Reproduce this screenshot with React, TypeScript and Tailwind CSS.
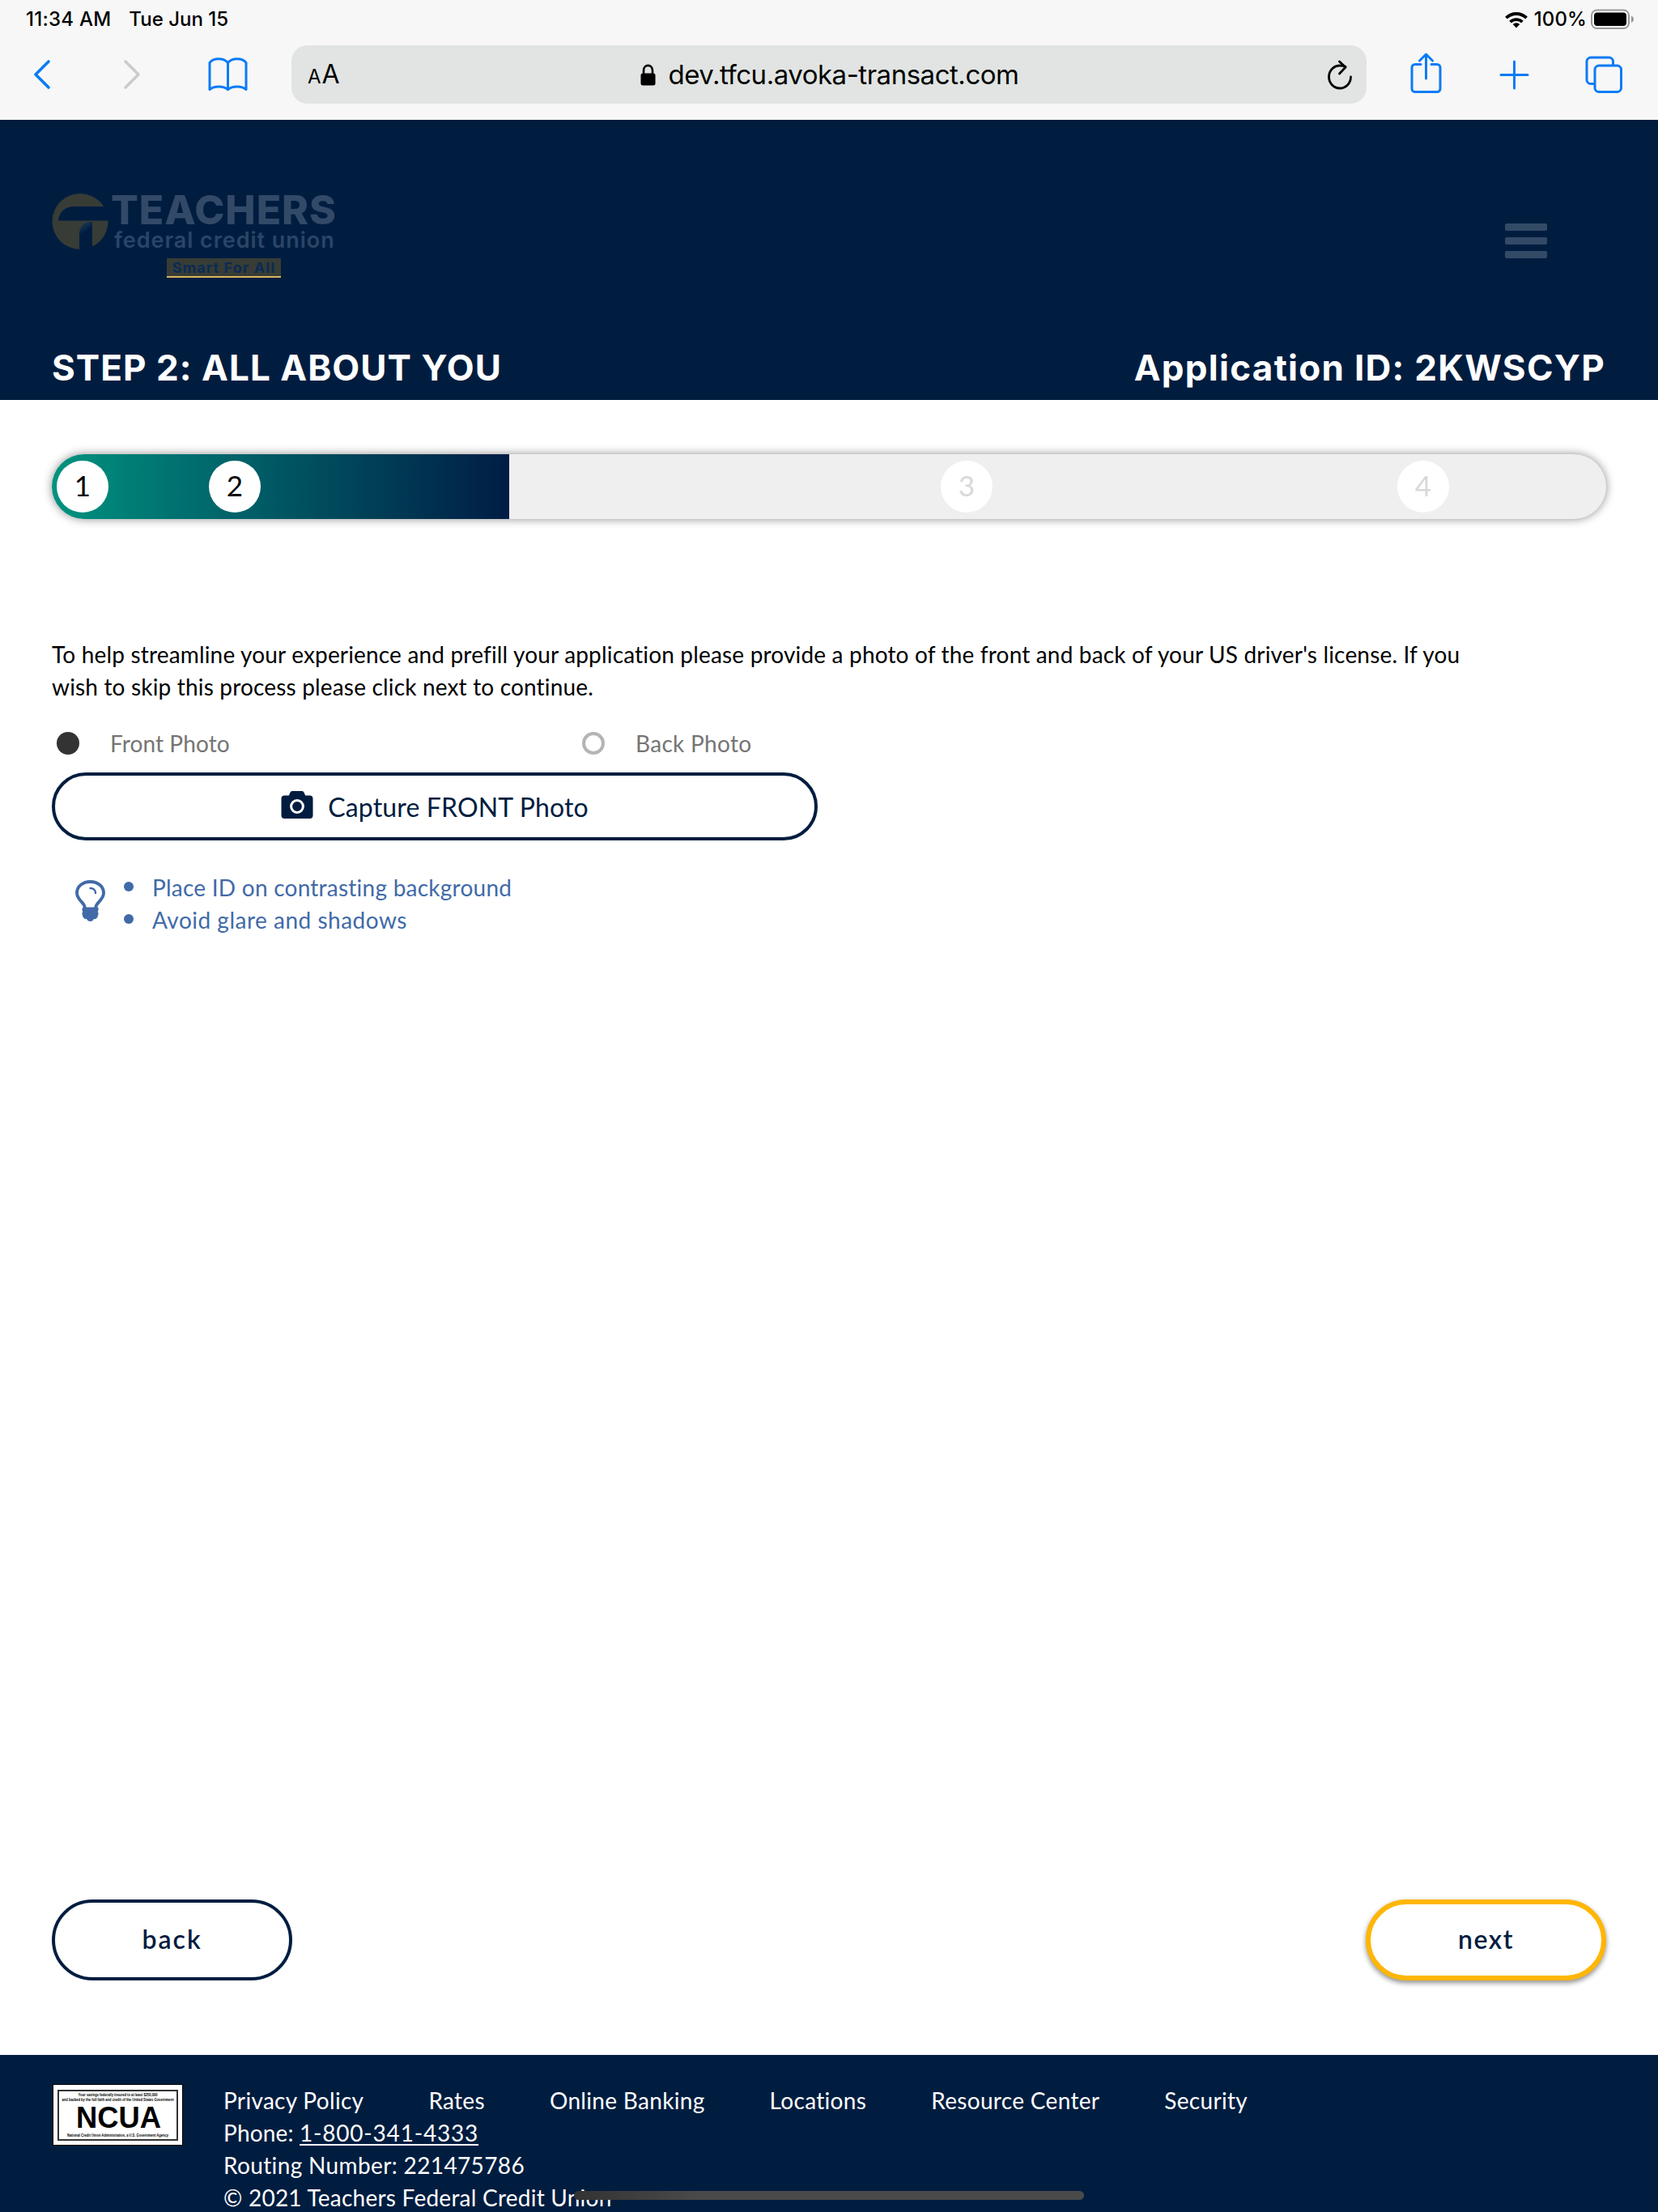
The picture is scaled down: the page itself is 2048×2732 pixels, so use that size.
import type { ReactNode } from "react";

const footerLinks = ["Privacy Policy", "Rates", "Online Banking", "Locations", "Resource Center", "Security"];

function Stroke({ w, h, className, sw = 3, children }: { w: number; h: number; className?: string; sw?: number; children: ReactNode }) {
  return (
    <svg
      width={w}
      height={h}
      viewBox={`0 0 ${w} ${h}`}
      fill="none"
      stroke="currentColor"
      strokeWidth={sw}
      strokeLinecap="round"
      strokeLinejoin="round"
      className={`shrink-0 ${className ?? ""}`}
    >
      {children}
    </svg>
  );
}

function StatusBar() {
  return (
    <div className="flex h-[48px] items-center justify-between pl-[32px] pr-[29px] text-[24px] font-medium text-black">
      <div className="flex gap-[22px] whitespace-nowrap">
        <span className="tracking-[0.25px]">11:34 AM</span>
        <span>Tue Jun 15</span>
      </div>
      <div className="flex items-center">
        <svg width="28" height="21" viewBox="0 0 28 21" className="mr-[8px]" fill="none" stroke="black" strokeWidth="4">
          <path d="M1.5 8.2a17.8 17.8 0 0 1 25 0" />
          <path d="M6.6 13.2a10.6 10.6 0 0 1 14.8 0" strokeWidth="3.8" />
          <path d="M14 20.5l-4.3-4.4a6.2 6.2 0 0 1 8.6 0z" fill="black" stroke="none" />
        </svg>
        <span className="tracking-[0.1px]">100%</span>
        <svg width="54" height="26" viewBox="0 0 54 26" className="ml-[5px]">
          <rect x="1" y="1.5" width="46" height="22.5" rx="6.5" fill="none" stroke="#999" strokeWidth="2" />
          <rect x="4" y="4.5" width="40" height="16.5" rx="4" fill="black" />
          <path d="M50 8.500c4 1.500 4 7 0 8.500z" fill="#999" />
        </svg>
      </div>
    </div>
  );
}

function BrowserBar() {
  return (
    <div className="mt-[8px] flex h-[72px] items-center text-[#0a7bf5]">
      <Stroke w={22} h={38} sw={3.6} className="ml-[41px]">
        <path d="M19 3 3 19l16 16" />
      </Stroke>
      <Stroke w={22} h={38} sw={3.4} className="ml-[89px] text-[#cacaca]">
        <path d="m3 3 16 16L3 35" />
      </Stroke>
      <Stroke w={49} h={42} sw={3} className="ml-[83px]">
        <path d="M24.500 6.500C21.500 3 17.500 1.800 13 1.800S4.500 3.200 2 6.500v33C5 37 9 36 13 36s8.500 1 11.500 3.500C27.500 37 32 36 36 36s8 1 11 3.500v-33c-2.500-3.300-6.500-4.700-11-4.700S27.500 3 24.500 6.500z" />
        <path d="M24.500 6.500v33" />
      </Stroke>
      <div className="ml-[54px] flex h-[72px] w-[1328px] items-center justify-between rounded-[20px] bg-[#e1e4e2] pl-[20px] pr-[18px] text-black">
        <div className="flex w-[414px] items-baseline pt-[2px] leading-[70px]">
          <span className="text-[24px]">A</span>
          <span className="ml-[1px] text-[32px]">A</span>
        </div>
        <div className="flex items-center gap-[15px]">
          <svg width="19" height="27" viewBox="0 0 19 27">
            <path d="M4 13V8.200c0-8.500 11-8.500 11 0V13" fill="none" stroke="black" strokeWidth="2.600" />
            <rect x="0.500" y="11.500" width="18" height="15" rx="2.500" fill="black" />
          </svg>
          <span className="whitespace-nowrap pt-[2px] text-[33px] tracking-[-0.48px]">dev.tfcu.avoka-transact.com</span>
        </div>
        <div className="flex w-[414px] justify-end">
          <Stroke w={30} h={38} sw={2.800}>
            <path d="M22 9.200C19.800 8.400 17.600 8 15.500 8A13.500 14 0 1 0 28.500 22" />
            <path d="m14.500 3 7.500 7-7.500 8" />
          </Stroke>
        </div>
      </div>
      <Stroke w={39} h={52} className="mb-[4px] ml-[54px]">
        <path d="M13 15.500H6a4 4 0 0 0-4 4v26a4 4 0 0 0 4 4h27a4 4 0 0 0 4-4v-26a4 4 0 0 0-4-4h-7M19.500 3v30M11.500 11l8-8 8 8" />
      </Stroke>
      <Stroke w={37} h={37} className="ml-[71px]">
        <path d="M18.500 2v33M2 18.500h33" />
      </Stroke>
      <Stroke w={46} h={46} className="ml-[69px]">
        <path d="M11.500 34.500H7a5 5 0 0 1-5-5V7a5 5 0 0 1 5-5h22.500a5 5 0 0 1 5 5v4.500" />
        <rect x="12" y="12" width="32.500" height="32.500" rx="5" />
      </Stroke>
    </div>
  );
}

function Logo() {
  return (
    <div className="flex items-start">
      <svg width="70" height="70" viewBox="0 0 70 70">
        <defs>
          <linearGradient id="stem" x1="0" y1="0" x2="0.300" y2="1">
            <stop offset="0" stopColor="#2c405c" />
            <stop offset="0.450" stopColor="#001d40" />
          </linearGradient>
        </defs>
        <circle cx="35" cy="34.500" r="34.500" fill="#373c36" />
        <path d="M65 16H28C16 16 9 23 8 33.500h62V25z" fill="#001d40" />
        <path d="M34 70V50c0-9 5-15 16-15v35z" fill="url(#stem)" />
      </svg>
      <div className="flex w-[284px] flex-col whitespace-nowrap pl-[3px]">
        <span className="text-[50px] font-extrabold leading-[40px] tracking-[0.9px] text-[#324968]">TEACHERS</span>
        <span className="mt-[4px] pl-[4px] text-[27px] font-semibold leading-[27px] tracking-[0.95px] text-[#2b4568]">federal credit union</span>
        <span className="ml-[69px] mt-[9px] flex h-[24px] w-[141px] items-center justify-center border-b-2 border-[#d9b75c] bg-[#373c36] pt-[1px] text-[18px] font-bold leading-[21px] tracking-[1.1px] text-[#0b2b55]">
          Smart For All
        </span>
      </div>
    </div>
  );
}

function PageHeader() {
  return (
    <header className="flex h-[346px] flex-col justify-between bg-[#001d40] pl-[64px] pr-[65px] text-white">
      <div className="flex items-start justify-between pr-[72px] pt-[91px]">
        <Logo />
        <div className="mt-[37px] flex flex-col gap-[8px]">
          <span className="h-[9px] w-[52px] rounded-[2px] bg-[#334a66]" />
          <span className="h-[9px] w-[52px] rounded-[2px] bg-[#334a66]" />
          <span className="h-[9px] w-[52px] rounded-[2px] bg-[#334a66]" />
        </div>
      </div>
      <div className="flex h-[80px] items-center justify-between whitespace-nowrap text-[44px] font-bold leading-none">
        <h1 className="tracking-[1.05px]">STEP 2: ALL ABOUT YOU</h1>
        <span className="tracking-[1.28px]">Application ID: 2KWSCYP</span>
      </div>
    </header>
  );
}

function StepDot({ n, className }: { n: number; className: string }) {
  return <span className={`flex size-[64px] shrink-0 items-center justify-center rounded-full bg-white pb-[3px] text-[35px] ${className}`}>{n}</span>;
}

function Progress() {
  return (
    <div className="mx-[64px] mt-[67px] flex h-[80px] items-center overflow-visible rounded-full bg-[#efefef] shadow-[0_0_12px_rgba(0,0,0,0.45)]">
      <div className="flex h-[80px] w-[565px] shrink-0 items-center rounded-l-full rounded-r-[2px] bg-linear-to-r from-[#00937f] to-[#001d44]">
        <StepDot n={1} className="ml-[6px] text-black" />
        <StepDot n={2} className="ml-[124px] text-black" />
      </div>
      <StepDot n={3} className="ml-[533px] text-[#d9d9d9]" />
      <StepDot n={4} className="ml-[500px] text-[#d9d9d9]" />
    </div>
  );
}

function Capture() {
  return (
    <section className="px-[64px] pt-[147px] text-[28px] leading-[40px]">
      <p className="whitespace-nowrap tracking-[0.17px] text-black">
        To help streamline your experience and prefill your application please provide a photo of the front and back of your US driver's license. If you
        <br />
        wish to skip this process please click next to continue.
      </p>
      <div className="mt-[30px] flex h-[40px] items-center text-[#757575]">
        <span className="ml-[6px] size-[28px] rounded-full bg-[#333]" />
        <span className="ml-[38px] w-[583px] tracking-[0.1px]">Front Photo</span>
        <span className="size-[28px] rounded-full border-4 border-[#b5b5b5]" />
        <span className="ml-[38px] tracking-[0.3px]">Back Photo</span>
      </div>
      <button className="mt-[16px] flex h-[84px] w-[946px] items-center justify-center rounded-full border-4 border-[#001d40] bg-white text-[32px] text-[#001d40]">
        <svg width="40" height="36" viewBox="0 0 40 36" className="mb-[3px] mr-[18px]">
          <path d="M4.500 5.500h5.300l1.800-4a2.500 2.500 0 0 1 2.300-1.500h12.200a2.500 2.500 0 0 1 2.300 1.500l1.800 4h5.300a4 4 0 0 1 4 4V30a4 4 0 0 1-4 4h-31a4 4 0 0 1-4-4V9.500a4 4 0 0 1 4-4z" fill="#001d40" />
          <circle cx="20" cy="19" r="7.400" fill="none" stroke="white" strokeWidth="3" />
        </svg>
        <span className="pt-[2px] tracking-[0.14px]">Capture FRONT Photo</span>
      </button>
      <div className="mt-[38px] flex items-start text-[#416aa8]">
        <svg width="37" height="53" viewBox="0 0 37 53" className="ml-[29px] mt-[11px]" fill="none" stroke="currentColor" strokeLinecap="round">
          <path d="M11.800 34c0-6-9.800-9.500-9.800-18C2 7.500 9.500 2 18.500 2S35 7.500 35 16c0 8.500-9.800 12-9.800 18" strokeWidth="3.800" />
          <path d="M18.500 10c3.800 0 6.500 2.500 6.500 6" strokeWidth="2.400" />
          <path d="M9.500 33.500h18a1 1 0 0 1 1 1.500v2.500l-.8 1.500.8 1.500v2l-.8 1.500v1.500l-2.500 2.500h-2.200c-1.500 4-7.500 4-9 0h-2.200L9.300 45.500V44l-.8-1.500v-2l.8-1.500-.8-1.500V35z" fill="currentColor" stroke="none" />
        </svg>
        <ul className="ml-[23px]">
          <li className="flex items-center tracking-[0.24px]">
            <span className="mb-[2px] mr-[23px] size-[12px] rounded-full bg-[#416aa8]" />
            Place ID on contrasting background
          </li>
          <li className="flex items-center tracking-[0.5px]">
            <span className="mb-[2px] mr-[23px] size-[12px] rounded-full bg-[#416aa8]" />
            Avoid glare and shadows
          </li>
        </ul>
      </div>
    </section>
  );
}

function NcuaBadge() {
  return (
    <svg width="161" height="76" viewBox="0 0 161 76" className="mt-[1px] shrink-0 font-['Liberation_Sans',sans-serif] font-bold" textAnchor="middle">
      <rect x="0.500" y="0.500" width="160" height="75" fill="white" stroke="black" />
      <rect x="7" y="8" width="147" height="61" fill="none" stroke="#333" strokeWidth="2" />
      <text x="80.500" y="14.500" fontSize="5.200" textLength="98" lengthAdjust="spacingAndGlyphs">
        Your savings federally insured to at least $250,000
      </text>
      <text x="80.500" y="20.500" fontSize="5.200" textLength="138" lengthAdjust="spacingAndGlyphs">
        and backed by the full faith and credit of the United States Government
      </text>
      <text x="81.500" y="53.500" fontSize="36" textLength="105" lengthAdjust="spacingAndGlyphs">
        NCUA
      </text>
      <text x="80.500" y="65" fontSize="5.200" textLength="125" lengthAdjust="spacingAndGlyphs">
        National Credit Union Administration, a U.S. Government Agency
      </text>
    </svg>
  );
}

function Footer() {
  return (
    <footer className="relative flex h-[194px] items-start overflow-hidden bg-[#001d40] pl-[65px] pt-[35px] text-white">
      <NcuaBadge />
      <div className="ml-[50px] mt-[1px] whitespace-nowrap text-[28px] leading-[40px] tracking-[0.17px]">
        <nav className="flex gap-[80px] tracking-[0.32px]">
          {footerLinks.map((label) => (
            <a key={label}>{label}</a>
          ))}
        </nav>
        <p>
          Phone: <a className="tracking-[0.8px] underline decoration-2 underline-offset-[3px]">1-800-341-4333</a>
        </p>
        <p className="tracking-[0.36px]">Routing Number: 221475786</p>
        <p className="tracking-[0.24px]">© 2021 Teachers Federal Credit Union</p>
      </div>
      <div className="absolute bottom-[15px] left-[709px] h-[11px] w-[630px] rounded-full bg-linear-to-r from-[#333] to-[#4a4a4a] to-25%" />
    </footer>
  );
}

export default function App() {
  return (
    <div className="flex h-[2732px] w-[2048px] flex-col overflow-hidden bg-white font-[Inter,sans-serif]">
      <div className="h-[148px] shrink-0 bg-[#f7f7f7]">
        <StatusBar />
        <BrowserBar />
      </div>
      <PageHeader />
      <div className="flex grow flex-col font-[Lato,sans-serif]">
        <main className="flex grow flex-col">
          <Progress />
          <Capture />
          <div className="mb-[92px] mt-auto flex justify-between px-[64px] text-[32px] font-semibold text-[#001d40]">
            <button className="h-[100px] w-[297px] rounded-full border-4 border-[#001d40] bg-white pb-[3px] tracking-[2px]">back</button>
            <button className="h-[100px] w-[297px] rounded-full border-[6px] border-[#ffb606] bg-white pb-[3px] tracking-[1.6px] shadow-[0_3px_6px_rgba(0,0,0,0.45)]">next</button>
          </div>
        </main>
        <Footer />
      </div>
    </div>
  );
}
